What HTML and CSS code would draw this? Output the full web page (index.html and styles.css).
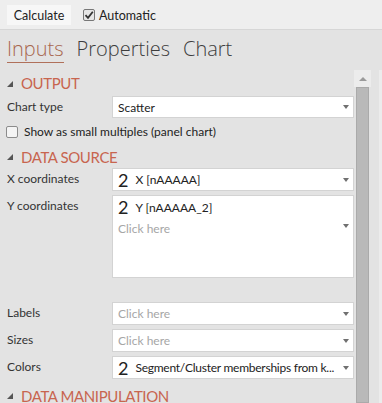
FILE: index.html
```html
<!DOCTYPE html>
<html>
<head>
<meta charset="utf-8">
<link rel="stylesheet" href="styles.css">
</head>
<body>
<div class="toolbar">
  <button class="btn">Calculate</button>
  <label class="auto"><span class="cb checked"><svg width="10" height="10" viewBox="0 0 10 10"><path d="M1.5 5.2 L4 7.8 L8.8 1.8" fill="none" stroke="#333" stroke-width="1.8"/></svg></span>Automatic</label>
</div>
<div class="tabs">
  <span class="tab active">Inputs</span>
  <span class="tab">Properties</span>
  <span class="tab">Chart</span>
</div>
<div class="body">
  <div class="main">
    <div class="section s1"><span class="tri"></span>OUTPUT</div>
    <div class="row r1"><span class="lbl">Chart type</span><div class="box"><span class="val">Scatter</span><span class="arr"></span></div></div>
    <div class="checkrow"><span class="cb"></span>Show as small multiples (panel chart)</div>
    <div class="section s2"><span class="tri"></span>DATA SOURCE</div>
    <div class="row"><span class="lbl">X coordinates</span><div class="box"><span class="num">2</span><span class="val">X [nAAAAA]</span><span class="arr"></span></div></div>
    <div class="row tall"><span class="lbl">Y coordinates</span><div class="box multi"><div class="line"><span class="num">2</span><span class="val">Y [nAAAAA_2]</span></div><div class="line ph-line"><span class="ph">Click here</span><span class="arr"></span></div></div></div>
    <div class="spacer"></div>
    <div class="row"><span class="lbl">Labels</span><div class="box"><span class="ph">Click here</span><span class="arr"></span></div></div>
    <div class="row"><span class="lbl">Sizes</span><div class="box"><span class="ph">Click here</span><span class="arr"></span></div></div>
    <div class="row"><span class="lbl">Colors</span><div class="box"><span class="num">2</span><span class="val tight">Segment/Cluster memberships from k...</span><span class="arr"></span></div></div>
    <div class="section s3"><span class="tri"></span>DATA MANIPULATION</div>
  </div>
  <div class="scroll">
    <div class="sup"><span class="uparr"></span></div>
    <div class="thumb"></div>
  </div>
  <div class="edge"></div>
</div>
</body>
</html>
```
FILE: styles.css
```css
* { box-sizing: border-box; }
html, body { margin: 0; padding: 0; }
body {
  width: 382px; height: 403px; overflow: hidden;
  background: #e3e3e3;
  font-family: "Lato", "Open Sans", sans-serif;
  font-size: 12px; color: #333;
}
.toolbar {
  height: 30px; background: #eeeeee; border-bottom: 1px solid #d6d6d6;
  display: flex; align-items: flex-start; padding: 5px 0 0 7px;
}
.btn {
  width: 64px; height: 20px; background: #f7f7f7; border: none; padding: 0;
  font-family: inherit; font-size: 12.5px; color: #222;
}
.auto { display: flex; align-items: center; margin-left: 12px; height: 20px; color: #222; font-size: 12.5px; }
.cb {
  display: inline-flex; align-items: center; justify-content: center;
  width: 12px; height: 12px; border: 1px solid #8c8c8c; border-radius: 2px;
  background: #f4f4f4; margin-right: 4px; flex-shrink: 0;
}
.auto .cb { background: #e6e6e6; border-color: #777; }
.tabs {
  height: 40px; display: flex; gap: 13px; padding: 5px 0 0 7px; align-items: flex-start;
  font-family: "Open Sans", sans-serif;
}
.tab { font-size: 20px; font-weight: 300; color: #3d3d3d; line-height: 27px; height: 28px; }
.tab.active { color: #a8674f; border-bottom: 1px solid #b0705a; }
.body { display: flex; height: 333px; }
.main { width: 354px; display: flex; flex-direction: column; padding-left: 7px; }
.main > * { flex-shrink: 0; }
.section {
  display: flex; align-items: center;
  font-size: 15px; letter-spacing: -0.4px; color: #c8654f;
}
.s1 { height: 26px; }
.s2 { height: 23px; }
.s3 { height: 25px; }
.tri {
  width: 0; height: 0; border-left: 6px solid transparent; border-bottom: 6px solid #555;
  margin-right: 8px; margin-top: 1px;
}
.row { display: flex; height: 23px; margin-bottom: 4px; }
.r1 { margin-bottom: 0; height: 22px; }
.lbl { width: 105px; line-height: 22px; }
.box {
  flex: 1; background: #fff; border: 1px solid #d3d3d3; display: flex; align-items: center;
  padding-left: 5px; position: relative;
}
.tall { height: 83px; }
.multi { flex-direction: column; align-items: stretch; padding-top: 2px; }
.line { display: flex; align-items: center; height: 18px; }
.ph-line { height: 18px; margin-top: 3px; }
.num { font-size: 18px; color: #222; margin-right: 7px; line-height: 18px; }
.val { color: #222; white-space: nowrap; }
.tight { letter-spacing: -0.25px; }
.ph { color: #a6a6a6; }
.arr {
  position: absolute; right: 4px;
  width: 0; height: 0; border-left: 3.5px solid transparent; border-right: 3.5px solid transparent;
  border-top: 4px solid #707070;
}
.ph-line .arr { top: 28px; }
.checkrow { display: flex; align-items: center; height: 27px; color: #222; }
.checkrow .cb { margin-left: -1px; margin-right: 6px; width: 12px; height: 12px; }
.spacer { height: 20px; }
.scroll { width: 17px; display: flex; flex-direction: column; }
.sup { height: 17px; background: #ececec; display: flex; align-items: center; justify-content: center; }
.uparr { width: 0; height: 0; border-left: 4px solid transparent; border-right: 4px solid transparent; border-bottom: 4px solid #9a9a9a; }
.thumb { flex: 1; margin: 0 2px; background: #b9b9b9; border: 1px solid #aaa; }
.edge { flex: 1; display: flex; justify-content: flex-end; }
.edge::after { content: ""; width: 3px; background: #ececec; }
```
